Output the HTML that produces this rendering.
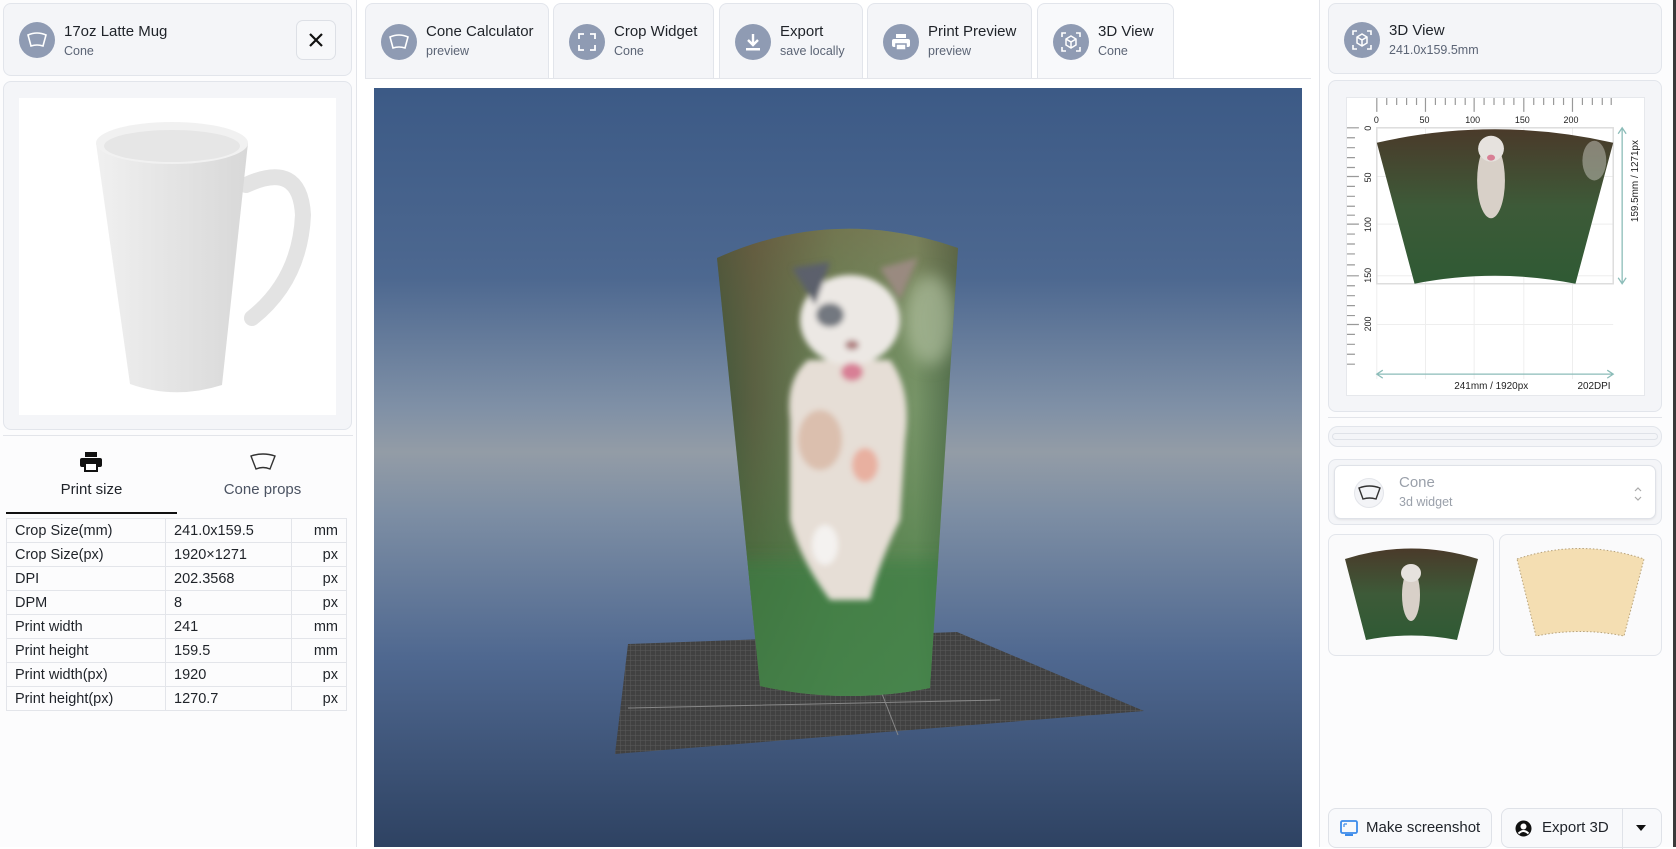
<!DOCTYPE html>
<html><head><meta charset="utf-8">
<style>
*{box-sizing:border-box;margin:0;padding:0}
body{width:1676px;height:847px;overflow:hidden;background:#fff;font-family:"Liberation Sans",sans-serif;color:#1f2329;position:relative}
.abs{position:absolute}
.card{position:absolute;background:#f4f5f8;border:1px solid #e2e5eb;border-radius:8px}
.ic{position:absolute;width:36px;height:36px;border-radius:50%;background:#8f9bb3;display:flex;align-items:center;justify-content:center}
.t1{position:absolute;font-size:15px;color:#1f2329}
.t2{position:absolute;font-size:12.5px;color:#5b6475}
.tab{position:absolute;top:3px;height:75px;background:#f4f5f8;border:1px solid #e2e5eb;border-bottom:none;border-radius:8px 8px 0 0}
table{border-collapse:collapse;font-size:14.5px}
td{border:1px solid #e3e5ea;height:24px;padding:0 8px;color:#1f2329}
</style></head><body>

<!-- LEFT COLUMN -->
<div class="abs" style="left:0;top:0;width:357px;height:847px;background:#fcfcfd"></div>
<div class="abs" style="left:356px;top:0;width:1px;height:847px;background:#e3e5ea"></div>
<div class="card" style="left:3px;top:3px;width:349px;height:73px">
  <div class="ic" style="left:15px;top:18px"><svg width="22" height="16" viewBox="0 0 22 16"><path d="M2 3 Q11 -1 20 3 L17 14 Q11 12 5 14 Z" fill="none" stroke="#fff" stroke-width="1.6"/></svg></div>
  <div class="t1" style="left:60px;top:19px">17oz Latte Mug</div>
  <div class="t2" style="left:60px;top:40px">Cone</div>
  <div class="abs" style="left:292px;top:16px;width:40px;height:40px;border:1px solid #dde0e6;border-radius:7px;background:#f7f8fa;display:flex;align-items:center;justify-content:center"><svg width="16" height="16"><path d="M2 2L14 14M14 2L2 14" stroke="#111" stroke-width="2.2"/></svg></div>
</div>
<div class="card" style="left:3px;top:81px;width:349px;height:349px">
  <div class="abs" style="left:15px;top:16px;width:317px;height:317px;background:#fff">
    <svg width="317" height="317" viewBox="19 98 317 317">
      <defs><linearGradient id="mg" x1="0" x2="1"><stop offset="0" stop-color="#f0f0f0"/><stop offset=".5" stop-color="#e4e4e4"/><stop offset="1" stop-color="#d8d8d8"/></linearGradient></defs>
      <path d="M246 185 Q300 160 303 215 Q300 280 252 318" fill="none" stroke="#e3e3e3" stroke-width="16" stroke-linecap="round"/>
      <path d="M96 143 L130 384 Q175 400 222 385 L248 143 Z" fill="url(#mg)"/>
      <ellipse cx="172" cy="143" rx="76" ry="21" fill="#f1f1f1"/>
      <ellipse cx="172" cy="146" rx="68" ry="16" fill="#e6e6e6"/>
    </svg>
  </div>
</div>
<div class="abs" style="left:3px;top:435px;width:350px;height:1px;background:#e3e5ea"></div>
<svg class="abs" style="left:80px;top:452px" width="22" height="20" viewBox="0 0 22 20"><rect x="5" y="0" width="12" height="5" fill="#111"/><rect x="0" y="6" width="22" height="9" rx="2" fill="#111"/><rect x="5" y="11" width="12" height="8" fill="#fff" stroke="#111" stroke-width="2"/></svg>
<div class="abs" style="left:6px;top:481px;width:171px;text-align:center;font-size:15px">Print size</div>
<svg class="abs" style="left:249px;top:453px" width="28" height="18" viewBox="0 0 28 18"><path d="M2 3 Q14 -1 26 3 L21 16 Q14 13 7 16 Z" fill="none" stroke="#333" stroke-width="1.4"/></svg>
<div class="abs" style="left:177px;top:481px;width:171px;text-align:center;font-size:15px;color:#4b5362">Cone props</div>
<div class="abs" style="left:6px;top:512px;width:171px;height:2px;background:#111"></div>
<table class="abs" style="left:6px;top:518px;width:341px">
<tr><td style="width:159px">Crop Size(mm)</td><td style="width:126px">241.0x159.5</td><td style="text-align:right">mm</td></tr>
<tr><td>Crop Size(px)</td><td>1920×1271</td><td style="text-align:right">px</td></tr>
<tr><td>DPI</td><td>202.3568</td><td style="text-align:right">px</td></tr>
<tr><td>DPM</td><td>8</td><td style="text-align:right">px</td></tr>
<tr><td>Print width</td><td>241</td><td style="text-align:right">mm</td></tr>
<tr><td>Print height</td><td>159.5</td><td style="text-align:right">mm</td></tr>
<tr><td>Print width(px)</td><td>1920</td><td style="text-align:right">px</td></tr>
<tr><td>Print height(px)</td><td>1270.7</td><td style="text-align:right">px</td></tr>
</table>

<!-- MIDDLE TABS -->
<div class="tab" style="left:365px;width:184px">
  <div class="ic" style="left:15px;top:20px"><svg width="22" height="16"><path d="M2 3 Q11 -1 20 3 L17 14 Q11 12 5 14 Z" fill="none" stroke="#fff" stroke-width="1.6"/></svg></div>
  <div class="t1" style="left:60px;top:19px">Cone Calculator</div><div class="t2" style="left:60px;top:40px">preview</div></div>
<div class="tab" style="left:553px;width:161px">
  <div class="ic" style="left:15px;top:20px"><svg width="18" height="18"><path d="M1 6V1H6M12 1H17V6M17 12V17H12M6 17H1V12" fill="none" stroke="#fff" stroke-width="1.8"/></svg></div>
  <div class="t1" style="left:60px;top:19px">Crop Widget</div><div class="t2" style="left:60px;top:40px">Cone</div></div>
<div class="tab" style="left:719px;width:144px">
  <div class="ic" style="left:15px;top:20px"><svg width="16" height="18"><path d="M8 1V11M3 7L8 12L13 7" fill="none" stroke="#fff" stroke-width="2.4"/><rect x="1" y="15" width="14" height="2.5" fill="#fff"/></svg></div>
  <div class="t1" style="left:60px;top:19px">Export</div><div class="t2" style="left:60px;top:40px">save locally</div></div>
<div class="tab" style="left:867px;width:165px">
  <div class="ic" style="left:15px;top:20px"><svg width="18" height="17"><rect x="4" y="0" width="10" height="4" fill="#fff"/><rect x="0" y="5" width="18" height="8" rx="2" fill="#fff"/><rect x="4" y="10" width="10" height="6" fill="#fff" stroke="#8f9bb3" stroke-width="1.5"/></svg></div>
  <div class="t1" style="left:60px;top:19px">Print Preview</div><div class="t2" style="left:60px;top:40px">preview</div></div>
<div class="tab" style="left:1037px;width:137px;background:#f8f9fb">
  <div class="ic" style="left:15px;top:20px"><svg width="20" height="20"><path d="M1 5V1H5M15 1H19V5M19 15V19H15M5 19H1V15" fill="none" stroke="#fff" stroke-width="1.6"/><path d="M10 4L15 7V13L10 16L5 13V7Z M5 7L10 10L15 7M10 10V16" fill="none" stroke="#fff" stroke-width="1.5"/></svg></div>
  <div class="t1" style="left:60px;top:19px">3D View</div><div class="t2" style="left:60px;top:40px">Cone</div></div>
<div class="abs" style="left:365px;top:78px;width:946px;height:1px;background:#e3e5ea"></div>

<!-- CANVAS -->
<div class="abs" style="left:374px;top:88px;width:928px;height:759px;background:linear-gradient(180deg,#3c5a86 0%,#4d6890 25%,#7f90a6 42%,#939ca6 48%,#7d8ea4 56%,#4f6890 75%,#2e4262 100%)"></div>
<svg class="abs" style="left:374px;top:88px" width="928" height="759" viewBox="374 88 928 759">
  <defs>
    <pattern id="grid" width="5" height="5" patternUnits="userSpaceOnUse"><rect width="5" height="5" fill="#414141"/><path d="M0 0H5M0 0V5" stroke="#5a5a5a" stroke-width="1"/></pattern>
    <linearGradient id="cupg" x1="0" x2="1"><stop offset="0" stop-color="#2f4a33"/><stop offset=".2" stop-color="#5a5a40"/><stop offset=".5" stop-color="#6f8a5e"/><stop offset=".8" stop-color="#7d9a6e"/><stop offset="1" stop-color="#3e5a40"/></linearGradient>
    <linearGradient id="cupv" x1="0" y1="0" x2="0" y2="1"><stop offset="0" stop-color="#7a5a3e" stop-opacity=".5"/><stop offset=".4" stop-color="#5a7a4a" stop-opacity=".2"/><stop offset=".75" stop-color="#3f7a3e" stop-opacity=".6"/><stop offset="1" stop-color="#4a8a50" stop-opacity=".7"/></linearGradient>
    <filter id="bl" x="-20%" y="-20%" width="140%" height="140%"><feGaussianBlur stdDeviation="3"/></filter>
    <filter id="bl2"><feGaussianBlur stdDeviation="8"/></filter>
    <clipPath id="cc"><path d="M717 258 Q835 205 958 248 L930 688 Q845 705 760 686 Z"/></clipPath>
  </defs>
  <path d="M628 644 L957 632 L1144 711 L615 754 Z" fill="url(#grid)"/>
  <path d="M628 708 L1000 700 M860 637 L898 735" stroke="#888" stroke-width="1"/>
  <g clip-path="url(#cc)">
    <rect x="700" y="200" width="270" height="510" fill="url(#cupg)"/>
    <rect x="700" y="200" width="270" height="510" fill="url(#cupv)"/>
    <g filter="url(#bl2)">
      <ellipse cx="930" cy="320" rx="25" ry="45" fill="#b9c8a8" opacity=".6"/>
      <rect x="700" y="560" width="270" height="150" fill="#3a7e42" opacity=".6"/>
    </g>
    <g filter="url(#bl)">
      <path d="M790 420 Q785 380 808 360 L890 360 Q912 390 905 440 L900 520 Q880 560 870 600 L830 600 Q800 560 790 520 Z" fill="#e6ded6"/>
      <ellipse cx="850" cy="320" rx="50" ry="45" fill="#ece8e4"/>
      <path d="M792 268 L830 262 L815 305 Z" fill="#5c616c"/>
      <path d="M918 258 L880 268 L900 300 Z" fill="#9a8a80"/>
      <ellipse cx="830" cy="315" rx="14" ry="12" fill="#555b66" opacity=".8"/>
      <ellipse cx="852" cy="345" rx="7" ry="5" fill="#b08080"/>
      <ellipse cx="852" cy="372" rx="11" ry="9" fill="#d87f95"/>
      <ellipse cx="865" cy="465" rx="13" ry="17" fill="#e8b0a0"/>
      <ellipse cx="820" cy="440" rx="22" ry="30" fill="#d6b29c" opacity=".7"/>
      <ellipse cx="825" cy="545" rx="13" ry="20" fill="#f4f2f0"/>
    </g>
  </g>
</svg>

<!-- RIGHT COLUMN -->
<div class="abs" style="left:1319px;top:0;width:1px;height:847px;background:#e3e5ea"></div>
<div class="abs" style="left:1320px;top:0;width:353px;height:847px;background:#fcfcfd"></div>
<div class="abs" style="left:1673px;top:0;width:3px;height:847px;background:#3a3a3a"></div>
<div class="card" style="left:1328px;top:3px;width:334px;height:71px">
  <div class="ic" style="left:15px;top:18px"><svg width="20" height="20"><path d="M1 5V1H5M15 1H19V5M19 15V19H15M5 19H1V15" fill="none" stroke="#fff" stroke-width="1.6"/><path d="M10 4L15 7V13L10 16L5 13V7Z M5 7L10 10L15 7M10 10V16" fill="none" stroke="#fff" stroke-width="1.5"/></svg></div>
  <div class="t1" style="left:60px;top:18px">3D View</div><div class="t2" style="left:60px;top:39px">241.0x159.5mm</div>
</div>
<div class="card" style="left:1328px;top:80px;width:334px;height:332px"></div>
<svg class="abs" style="left:1346px;top:97px;background:#fff;border:1px solid #e6e8ec" width="299" height="299" viewBox="1346 97 299 299" font-family="Liberation Sans" font-size="9" fill="#222">
  <path d="M1376 127V380 M1425 127V380 M1474 127V380 M1524 127V380 M1573 127V380 M1376 176H1614 M1376 224H1614 M1376 276H1614 M1376 325H1614" stroke="#eee"/>
  <g stroke="#999" stroke-width="1.2">
    <path d="M1376 97V111M1386 97V104M1396 97V104M1406 97V104M1416 97V104M1425 97V111M1435 97V104M1445 97V104M1455 97V104M1465 97V104M1474 97V111M1484 97V104M1494 97V104M1504 97V104M1514 97V104M1524 97V111M1534 97V104M1544 97V104M1554 97V104M1564 97V104M1573 97V111M1583 97V104M1593 97V104M1603 97V104M1612 97V104"/>
    <path d="M1346 127H1358M1346 137H1354M1346 147H1354M1346 157H1354M1346 167H1354M1346 176H1358M1346 186H1354M1346 196H1354M1346 206H1354M1346 215H1354M1346 224H1358M1346 234H1354M1346 244H1354M1346 254H1354M1346 265H1354M1346 276H1358M1346 286H1354M1346 296H1354M1346 306H1354M1346 316H1354M1346 325H1358M1346 335H1354M1346 345H1354M1346 355H1354M1346 365H1354"/>
  </g>
  <text x="1373" y="122">0</text><text x="1419" y="122">50</text><text x="1465" y="122">100</text><text x="1515" y="122">150</text><text x="1564" y="122">200</text>
  <g font-size="9"><text transform="translate(1370,130) rotate(-90)">0</text><text transform="translate(1370,182) rotate(-90)">50</text><text transform="translate(1370,232) rotate(-90)">100</text><text transform="translate(1370,283) rotate(-90)">150</text><text transform="translate(1370,332) rotate(-90)">200</text></g>
  <rect x="1376" y="127" width="238" height="157" fill="none" stroke="#ddd" stroke-width="1.5"/>
  <defs><linearGradient id="pg" x1="0" y1="0" x2="0" y2="1"><stop offset="0" stop-color="#4a3a2a"/><stop offset=".5" stop-color="#3d5a38"/><stop offset="1" stop-color="#2f5a34"/></linearGradient></defs>
  <path d="M1376 142 Q1495 115 1614 142 L1576 284 Q1495 268 1414 284 Z" fill="url(#pg)"/>
  <ellipse cx="1595" cy="160" rx="12" ry="20" fill="#c8c8c0" opacity=".5"/>
  <ellipse cx="1491" cy="180" rx="14" ry="38" fill="#d8d0c8"/>
  <ellipse cx="1491" cy="148" rx="13" ry="13" fill="#e6e2de"/>
  <ellipse cx="1491" cy="157" rx="4" ry="3" fill="#d87f95"/>
  <path d="M1623 128V283M1619 133L1623 127L1627 133M1619 278L1623 284L1627 278" stroke="#8bbcb8" fill="none" stroke-width="1.3"/>
  <text transform="translate(1639,222) rotate(-90)" font-size="10">159.5mm  / 1271px</text>
  <path d="M1376 375H1614M1382 371L1376 375L1382 379M1608 371L1614 375L1608 379" stroke="#8bbcb8" fill="none" stroke-width="1.3"/>
  <text x="1454" y="390" font-size="10">241mm / 1920px</text><text x="1578" y="390" font-size="10">202DPI</text>
</svg>
<div class="abs" style="left:1328px;top:417px;width:334px;height:1px;background:#e3e5ea"></div>
<div class="card" style="left:1328px;top:426px;width:334px;height:21px;border-radius:10px"><div class="abs" style="left:3px;top:6px;width:326px;height:7px;border:1px solid #dfe2e8;border-radius:4px"></div></div>
<div class="card" style="left:1328px;top:459px;width:334px;height:66px">
  <div class="abs" style="left:5px;top:5px;width:322px;height:54px;background:#fff;border:1px solid #dfe2e8;border-radius:7px;box-shadow:0 1px 2px rgba(0,0,0,.08)">
    <div class="abs" style="left:19px;top:12px;width:30px;height:30px;border-radius:50%;background:#f3f4f7;border:1px solid #e3e5ea"></div>
    <svg class="abs" style="left:22px;top:19px" width="25" height="16"><path d="M2 3 Q12.5 -1 23 3 L19 14 Q12.5 12 6 14 Z" fill="none" stroke="#333" stroke-width="1.4"/></svg>
    <div class="abs" style="left:64px;top:8px;font-size:15px;color:#9aa0aa">Cone</div>
    <div class="abs" style="left:64px;top:29px;font-size:12.5px;color:#9aa0aa">3d widget</div>
    <svg class="abs" style="left:298px;top:20px" width="10" height="16"><path d="M2 5L5 2L8 5M2 11L5 14L8 11" stroke="#aaa" fill="none" stroke-width="1.2"/></svg>
  </div>
</div>
<div class="card" style="left:1328px;top:534px;width:166px;height:122px;background:#fafafb">
  <svg class="abs" style="left:0;top:0" width="166" height="122">
    <path d="M16 24 Q82 3 149 24 L128 105 Q82 96 37 105 Z" fill="url(#pg)"/>
    <ellipse cx="82" cy="60" rx="9" ry="26" fill="#d8d0c8"/><ellipse cx="82" cy="38" rx="10" ry="9" fill="#e6e2de"/>
  </svg>
</div>
<div class="card" style="left:1499px;top:534px;width:163px;height:122px;background:#fafafb">
  <svg class="abs" style="left:0;top:0" width="163" height="122"><path d="M17 24 Q80 3 144 24 L124 101 Q80 92 36 101 Z" fill="#f4deb2" stroke="#b7a27a" stroke-width="1" stroke-dasharray="1.5 2"/></svg>
</div>
<div class="abs" style="left:1328px;top:808px;width:164px;height:40px;border:1px solid #dfe2e8;border-radius:8px;background:#f8f9fb">
  <svg class="abs" style="left:11px;top:11px" width="18" height="17"><rect x="1" y="1" width="16" height="12" rx="1.5" fill="none" stroke="#3b8bea" stroke-width="1.8"/><path d="M4 4H7M4 4V7" stroke="#3b8bea" stroke-width="1.2"/><rect x="5" y="14" width="8" height="2" fill="#3b8bea"/></svg>
  <div class="abs" style="left:37px;top:10px;font-size:15px">Make screenshot</div>
</div>
<div class="abs" style="left:1501px;top:808px;width:161px;height:40px;border:1px solid #dfe2e8;border-radius:8px;background:#f8f9fb">
  <svg class="abs" style="left:13px;top:11px" width="17" height="17"><circle cx="8.5" cy="8.5" r="8" fill="#111"/><circle cx="8.5" cy="6.5" r="3" fill="#fff"/><path d="M3.5 13.5 Q8.5 8.5 13.5 13.5" stroke="#fff" stroke-width="2" fill="none"/></svg>
  <div class="abs" style="left:40px;top:10px;font-size:15px">Export 3D</div>
  <div class="abs" style="left:120px;top:0;width:1px;height:40px;background:#dfe2e8"></div>
  <svg class="abs" style="left:134px;top:16px" width="10" height="6"><path d="M0 0H10L5 6Z" fill="#111"/></svg>
</div>
</body></html>
